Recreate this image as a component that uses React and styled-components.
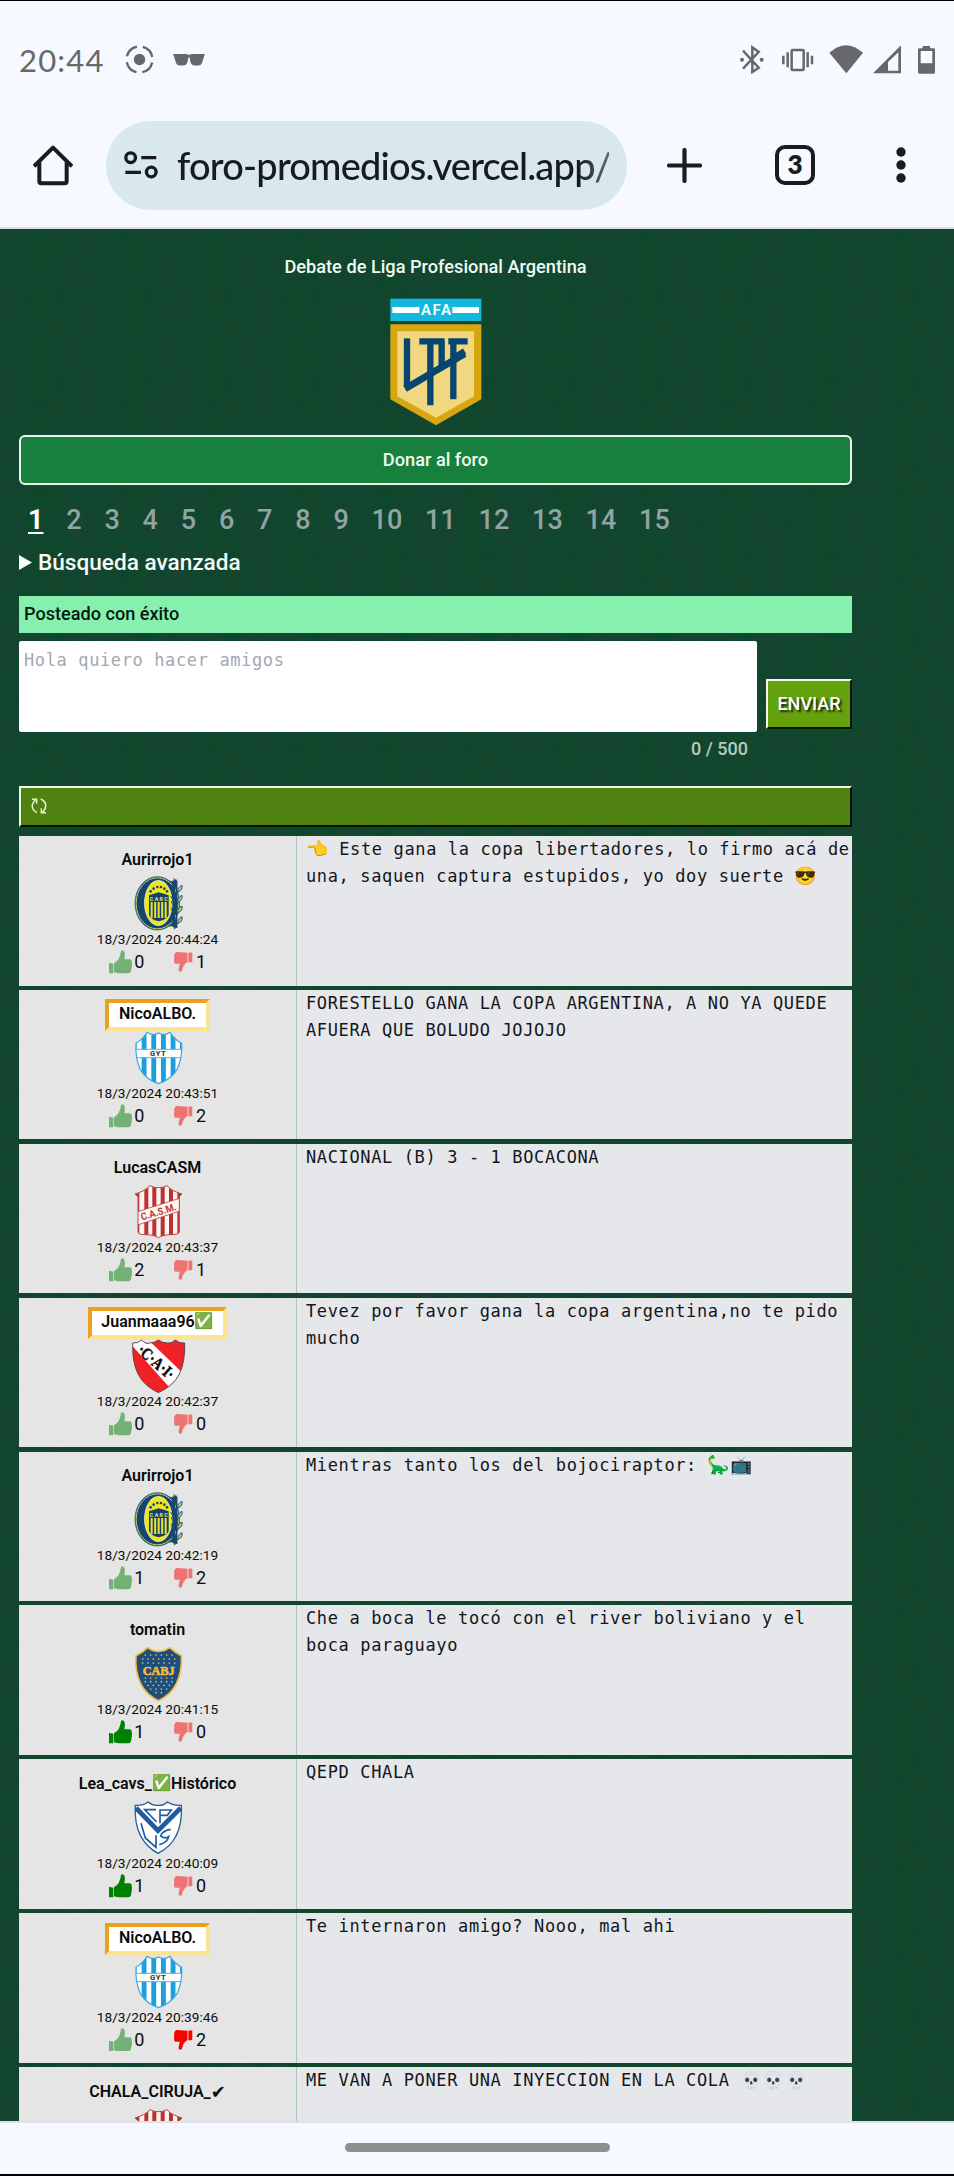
import React from "react";
import styled, { createGlobalStyle } from "styled-components";

const GlobalStyle = createGlobalStyle`
  * { box-sizing: border-box; }
  body { margin: 0; background: #f6f9ff; }
`;

const roboto = `Roboto, "Liberation Sans", sans-serif`;
const mono = `"DejaVu Sans Mono", "Liberation Mono", monospace`;

/* Felt-like grain, tiled over the green of the page. */
const grain = `url("data:image/svg+xml,%3Csvg xmlns='http://www.w3.org/2000/svg' width='86' height='86'%3E%3Cfilter id='f' x='0' y='0' width='100%25' height='100%25' color-interpolation-filters='sRGB'%3E%3CfeTurbulence type='fractalNoise' baseFrequency='0.06 0.12' numOctaves='3' seed='4' stitchTiles='stitch'/%3E%3CfeColorMatrix values='0 0 0 0 0.13 0 0 0 0 0.27 0 0 0 0 0.17 1.6 0 0 0 -0.5'/%3E%3C/filter%3E%3Crect width='86' height='86' filter='url(%23f)' opacity='0.5'/%3E%3C/svg%3E")`;

const Screen = styled.div`
  width: 954px;
  height: 2176px;
  display: flex;
  flex-direction: column;
  overflow: hidden;
  background: #f6f9ff;
  border-top: 1px solid #000;
  border-bottom: 2px solid #000;
  font-family: ${roboto};
`;

const StatusBar = styled.header`
  height: 120px;
  flex: none;
  display: flex;
  align-items: center;
  justify-content: space-between;
  padding: 0 18px 3px 19px;
`;

const StatusGroup = styled.div`
  display: flex;
  align-items: center;
  gap: ${(p) => p.$gap}px;
`;

const Clock = styled.span`
  font: 400 31px/36px Lato, sans-serif;
  letter-spacing: 1.2px;
  width: 87px;
  color: #66686b;
  white-space: nowrap;
`;

const Toolbar = styled.nav`
  height: 108px;
  flex: none;
  padding: 0 48px 18px 33px;
  display: flex;
  align-items: center;
  border-bottom: 2px solid #dcdfe4;
`;

const UrlPill = styled.div`
  width: 521px;
  height: 89px;
  margin: 0 40px 0 33px;
  border-radius: 45px;
  background: #d9e7ef;
  display: flex;
  align-items: center;
  padding: 0 18px;
`;

const Url = styled.span`
  margin-left: 19px;
  width: 433px;
  overflow: hidden;
  white-space: nowrap;
  font: 500 38px/60px Lato, sans-serif;
  letter-spacing: -0.8px;
  color: #171b1e;
  -webkit-mask-image: linear-gradient(to right, #000 93%, rgba(0, 0, 0, 0.6));
`;

const TabCount = styled.div`
  width: 40px;
  height: 40px;
  margin: 0 81px 0 73px;
  border: 4px solid #1a1d20;
  border-radius: 10px;
  font: 800 26px/31px Lato, sans-serif;
  text-align: center;
  color: #1a1d20;
`;

const Page = styled.main`
  flex: 1;
  min-height: 0;
  overflow: hidden;
  padding: 26px 102px 0 19px;
  display: flex;
  flex-direction: column;
  background-color: #0e462d;
  background-image:
    ${grain},
    repeating-linear-gradient(90deg, rgba(22, 66, 58, 0.25) 0 10px, rgba(10, 74, 42, 0.25) 45px, rgba(22, 66, 58, 0.25) 86px);
`;

const Title = styled.h1`
  margin: 0;
  font-size: 18.2px;
  font-weight: 500;
  line-height: 24px;
  text-align: center;
  color: #effaf4;
`;

const LeagueLogo = styled.svg`
  flex: none;
  align-self: center;
  width: 92px;
  height: 128px;
  margin-top: 19px;
`;

const DonateButton = styled.button`
  flex: none;
  height: 50px;
  margin-top: 8.5px;
  border: 2px solid #e9f8ee;
  border-radius: 6px;
  background: #16803c;
  color: #f0fbf4;
  font: 500 18.2px/24px ${roboto};
`;

const Pagination = styled.div`
  display: flex;
  gap: 22.8px;
  margin-top: 15.4px;
  padding-left: 9px;
`;

const PageLink = styled.span`
  font-size: 27px;
  line-height: 40px;
  font-weight: ${(p) => (p.$current ? 700 : 500)};
  color: ${(p) => (p.$current ? "#fff" : "#93a3a5")};
  text-decoration: ${(p) => (p.$current ? "underline" : "none")};
  text-decoration-thickness: 2px;
  text-underline-offset: 3px;
`;

const Search = styled.div`
  display: flex;
  align-items: center;
  gap: 6px;
  margin-top: 8px;
  font-size: 22.6px;
  font-weight: 500;
  line-height: 30px;
  color: #f4fbf7;
`;

const Notice = styled.div`
  height: 37px;
  flex: none;
  margin-top: 18.6px;
  padding-left: 5px;
  background: #88f0ae;
  color: #061a10;
  font-size: 18.1px;
  font-weight: 500;
  line-height: 36px;
`;

const Composer = styled.form`
  display: flex;
  align-items: flex-end;
  margin-top: 8px;
`;

const MessageBox = styled.textarea`
  width: 738px;
  height: 91px;
  padding: 6px 5px;
  border: 0;
  border-radius: 2px;
  resize: none;
  background: #fff;
  font: 17px/27px ${mono};
  letter-spacing: 0.62px;
  &::placeholder { color: #a2a8b2; opacity: 1; }
`;

const SendButton = styled.button`
  width: 86px;
  height: 50px;
  margin: 0 0 3px 9px;
  padding: 0;
  border: 2px solid;
  border-color: #f5fbe8 #0c1602 #0c1602 #f5fbe8;
  background: #65a00d;
  color: #fff;
  font: 500 18px/24px ${roboto};
  text-shadow: 2px 2px 2px #1a2a05;
`;

const Counter = styled.div`
  margin: 5px 104px 0 0;
  text-align: right;
  font-size: 18px;
  font-weight: 500;
  line-height: 24px;
  color: #b8cbc0;
`;

const RefreshBar = styled.button`
  flex: none;
  height: 41px;
  margin: 24.5px 0 9px;
  padding: 0 10px;
  border: 2px solid;
  border-color: #effbe2 #071002 #071002 #effbe2;
  background: #4f8210;
  display: flex;
  align-items: center;
`;

const Posts = styled.section`
  display: flex;
  flex-direction: column;
  gap: 4.3px;
`;

const Post = styled.article`
  display: flex;
  flex: none;
  height: 149.6px;
  background: #e5e7eb;
`;

const Author = styled.aside`
  width: 278px;
  flex: none;
  padding-top: 9.5px;
  display: flex;
  flex-direction: column;
  align-items: center;
  background: #e5e5e5;
  border-right: 1px solid #a9c6c0;
`;

const Name = styled.div`
  height: 32px;
  padding: 0 ${(p) => (p.$boxed ? 9.5 : 0)}px;
  border: 4.5px solid;
  border-color: ${(p) => (p.$boxed ? "#eba023 #fbe392 #fbe392 #eba023" : "transparent")};
  background: ${(p) => (p.$boxed ? "#fff" : "transparent")};
  font-size: 16px;
  font-weight: 600;
  line-height: 22px;
  color: #0a0a0a;
  white-space: nowrap;
  display: flex;
`;

const Tick = styled.span`
  font-family: "DejaVu Sans", sans-serif;
  font-size: 18px;
  font-weight: 700;
`;

const Crest = styled.svg`
  width: 56px;
  height: 56px;
  flex: none;
  margin-top: -1px;
`;

const Timestamp = styled.time`
  margin-top: -1px;
  font-size: 13.7px;
  line-height: 16px;
  color: #0c0c0c;
`;

const Votes = styled.div`
  display: flex;
  width: 97px;
  height: 24px;
  margin-top: 3px;
`;

const Vote = styled.span`
  display: flex;
  align-items: flex-start;
  gap: ${(p) => (p.$up ? 2 : 3)}px;
  width: ${(p) => (p.$up ? 65 : 32)}px;
  font-size: 18px;
  line-height: 24px;
  color: #0c0c0c;
`;

const Message = styled.p`
  margin: 0;
  padding-left: 9px;
  font-family: ${mono};
  font-size: 17px;
  letter-spacing: 0.625px;
  line-height: 27px;
  color: #14161a;
  white-space: pre;
`;

const Emoji = styled.span`
  display: inline-block;
  width: ${(p) => p.$w || 22.4}px;
  font-family: "Noto Color Emoji", sans-serif;
  font-size: ${(p) => p.$size || 18}px;
  letter-spacing: 0;
  line-height: 20px;
  vertical-align: baseline;
`;

const HomeBar = styled.footer`
  height: 53px;
  flex: none;
  border-top: 2px solid #dee2e6;
  display: flex;
  justify-content: center;
  padding: 20px 0 0 0;
`;

const Handle = styled.div`
  width: 265px;
  height: 9px;
  border-radius: 5px;
  background: #8b9090;
`;

const ShieldStripes = ({ xs, w, y, h, fill }) => xs.map((x) => <rect key={x} x={x} y={y} width={w} height={h} fill={fill} />);

function Central() {
  return (
    <Crest viewBox="388 138 168 168">
      <path d="M506 152 Q522 156 519 145 L529 150 V290 L521 299 Q520 286 504 290Z" fill="#17466f" stroke="#a9b56a" strokeWidth="2" />
      <ellipse cx="470" cy="220" rx="67" ry="80" fill="#14456f" stroke="#3d6c93" strokeWidth="3" />
      <ellipse cx="470" cy="220" rx="63.500" ry="76.500" fill="none" stroke="#c5cd52" strokeWidth="3" />
      <path d="M519 156 V288" stroke="#17466f" strokeWidth="9" />
      <ellipse cx="473" cy="219" rx="41" ry="67" fill="#f3e51c" stroke="#dfe3a0" strokeWidth="3.500" />
      <path d="M445 196 L474 187 L504 196 V255 Q500 268 474 274 Q449 268 445 255Z" fill="#12406c" />
      <ShieldStripes xs={[450, 460.5, 471, 481.5, 492]} w={6} y={216} h={48} fill="#ece32e" />
      <text x="474.5" y="213" fontSize="16" fontWeight="700" textAnchor="middle" fill="#e9e98a" fontFamily="Roboto" textLength="54">CARC</text>
      <g fill="#164a7c">
        <circle cx="450" cy="184" r="4" /><circle cx="459" cy="176" r="4" /><circle cx="470" cy="171" r="4" />
        <circle cx="481" cy="171" r="4" /><circle cx="491" cy="176" r="4" /><circle cx="499" cy="184" r="4" />
      </g>
      <path d="M510 198 l7 12 l-5 6 l7 12 l-7 8 l5 10" fill="none" stroke="#164a7c" strokeWidth="3" />
      <path d="M528 152 V294" stroke="#17466f" strokeWidth="4" />
      {[166, 196, 228, 260].map((y) => (
        <path key={y} d={`M531 ${y + 21} Q530 ${y + 6} 544 ${y} Q547 ${y + 15} 531 ${y + 21}Z`} fill="#b9c676" stroke="#1b4e79" strokeWidth="2.800" />
      ))}
    </Crest>
  );
}

function Gimnasia() {
  const d = "M439 607 Q456 619 473 609 Q491 619 508 607 Q520 627 543 640 Q546 683 529 719 Q510 749 473 761 Q437 749 419 719 Q403 683 406 640 Q428 627 439 607Z";
  return (
    <Crest viewBox="388 600 168 168">
      <clipPath id="gyt"><path d={d} /></clipPath>
      <g clipPath="url(#gyt)">
        <rect x="400" y="600" width="150" height="168" fill="#fdfeff" />
        <ShieldStripes xs={[393, 423, 452, 481, 510, 538]} w={14.5} y={600} h={168} fill="#1e9fdd" />
        <rect x="400" y="658" width="150" height="25" fill="#fff" stroke="#4fb4e6" strokeWidth="3" />
      </g>
      <path d={d} fill="none" stroke="#35a9e2" strokeWidth="3.5" />
      <text x="471.5" y="679" fontSize="23" fontWeight="700" textAnchor="middle" fill="#24343c" fontFamily="Roboto" textLength="47">GYT</text>
    </Crest>
  );
}

function SanMartin() {
  const d = "M448 137 Q461 144 473 143 Q486 144 499 137 Q512 153 544 162 L536 170 V276 Q534 284 514 284 Q486 284 473 293 Q460 284 434 284 Q413 284 412 276 V170 L403 162 Q434 153 448 137Z";
  return (
    <Crest viewBox="388 132 168 168">
      <clipPath id="casm"><path d={d} /></clipPath>
      <g clipPath="url(#casm)">
        <rect x="400" y="130" width="150" height="170" fill="#fbf3f2" />
        <ShieldStripes xs={[404, 431, 455, 480, 505, 530]} w={12} y={130} h={170} fill="#b8322f" />
        <path d="M408 216 L540 174 V212 L408 256Z" fill="#fdf8f7" stroke="#bd4541" strokeWidth="2.5" />
      </g>
      <path d={d} fill="none" stroke="#b94642" strokeWidth="3" />
      <text x="474" y="226" fontSize="30" fontWeight="700" textAnchor="middle" fill="#bd3430" fontFamily="Roboto" textLength="110" lengthAdjust="spacingAndGlyphs" transform="rotate(-17 474 217)">C.A.S.M.</text>
    </Crest>
  );
}

function Independiente() {
  const d = "M423 599 Q436 613 447 608 Q462 608 473 599 Q486 608 500 608 Q514 610 524 599 Q536 610 552 608 Q554 665 536 701 Q518 737 473 757 Q430 737 412 701 Q394 665 396 608 Q412 610 423 599Z";
  return (
    <Crest viewBox="388 593 168 168">
      <clipPath id="cai"><path d={d} /></clipPath>
      <g clipPath="url(#cai)">
        <rect x="388" y="590" width="170" height="170" fill="#ee2228" />
        <path d="M380 600 L436 592 L550 702 L510 745Z" fill="#fff" />
      </g>
      <path d={d} fill="none" stroke="#4b3a3c" strokeWidth="2.5" />
      <text x="466" y="681" fontSize="50" fontWeight="700" textAnchor="middle" fill="#0b0b0b" stroke="#0b0b0b" strokeWidth="1.500" fontFamily="Liberation Serif, serif" textLength="130" lengthAdjust="spacingAndGlyphs" transform="rotate(41 466 665)">·C·A·I·</text>
    </Crest>
  );
}

function Boca() {
  const d = "M441 592 Q457 604 473 603 Q490 604 507 592 Q522 606 542 616 Q545 662 527 700 Q511 733 473 751 Q436 733 420 700 Q402 662 406 616 Q427 606 441 592Z";
  return (
    <Crest viewBox="388 587 168 168">
      <path d={d} fill="#1d4e7d" stroke="#f3ba3c" strokeWidth="5" />
      <g fill="#d5bf72">
        {[[614, 6], [626, 7], [638, 7], [683, 6], [694, 6], [705, 5], [716, 4], [727, 2]].map(([y, n]) =>
          Array.from({ length: n }, (_, i) => <circle key={`${y}-${i}`} cx={474 + (i - (n - 1) / 2) * 16} cy={y} r="2.6" />)
        )}
      </g>
      <text x="474" y="675" fontSize="39" fontWeight="700" textAnchor="middle" fill="#f6b73a" fontFamily="Liberation Serif, serif" stroke="#f6b73a" strokeWidth="2" textLength="96" lengthAdjust="spacingAndGlyphs">CABJ</text>
    </Crest>
  );
}

function Velez() {
  const d = "M404 136 Q426 138 442 126 Q456 138 473 136 Q488 138 500 126 Q520 138 542 136 Q545 190 527 226 Q510 262 472 280 Q438 262 419 226 Q401 190 404 136Z";
  return (
    <Crest viewBox="388 120 168 168">
      <path d={d} fill="#fff" stroke="#2460a0" strokeWidth="4" />
      <path d="M406 144 L472 212 L540 144" fill="none" stroke="#1f5b9f" strokeWidth="14" />
      <g fill="none" stroke="#1f5b9f" strokeWidth="5">
        <path d="M466 149 H432 L468 186" />
        <path d="M478 190 V150 H512 L500 166 H480" />
        <path d="M421 190 L434 234 L466 262 V226" />
        <path d="M510 208 Q484 212 480 228 Q494 238 504 230 Q500 248 476 254" />
      </g>
    </Crest>
  );
}

const crests = { central: Central, gyt: Gimnasia, casm: SanMartin, cai: Independiente, boca: Boca, velez: Velez };

const ThumbUp = ({ active }) => (
  <svg width="23.3" height="23.7" viewBox="328 363 70 71" fill={active ? "#008000" : "#74b174"}>
    <path d="M328 401 L341 404 V433 H328Z" />
    <path d="M343 403 Q361 394 364 366 Q367 362 373 366 Q378 373 374 391 H391 Q398 393 396 400 L398 405 Q395 410 397 414 Q394 419 395 423 Q393 433 386 433 H356 L343 430Z" />
  </svg>
);

const ThumbDown = ({ active }) => (
  <svg width="21" height="23.7" viewBox="522 363 63 71" fill={active ? "#ff0000" : "#ee7373"}>
    <path d="M570 367 H583 V399 L570 401Z" />
    <path d="M567 368 V399 Q552 408 548 430 Q538 434 537 426 L541 405 H527 Q520 402 523 396 Q520 391 523 386 L522 381 Q523 367 532 366Z" />
  </svg>
);

const posts = [
  { name: "Aurirrojo1", crest: "central", date: "18/3/2024 20:44:24", up: 0, down: 1,
    text: <><Emoji>👈</Emoji> Este gana la copa libertadores, lo firmo acá de{"\n"}una, saquen captura estupidos, yo doy suerte <Emoji>😎</Emoji></> },
  { name: "NicoALBO.", boxed: true, crest: "gyt", date: "18/3/2024 20:43:51", up: 0, down: 2,
    text: "FORESTELLO GANA LA COPA ARGENTINA, A NO YA QUEDE\nAFUERA QUE BOLUDO JOJOJO" },
  { name: "LucasCASM", crest: "casm", date: "18/3/2024 20:43:37", up: 2, down: 1, text: "NACIONAL (B) 3 - 1 BOCACONA" },
  { name: <>Juanmaaa96<Emoji $w={19} $size={15.5}>✅</Emoji></>, boxed: true, crest: "cai", date: "18/3/2024 20:42:37", up: 0, down: 0,
    text: "Tevez por favor gana la copa argentina,no te pido\nmucho" },
  { name: "Aurirrojo1", crest: "central", date: "18/3/2024 20:42:19", up: 1, down: 2,
    text: <>Mientras tanto los del bojociraptor: <Emoji>🦕</Emoji><Emoji>📺</Emoji></> },
  { name: "tomatin", crest: "boca", date: "18/3/2024 20:41:15", up: 1, upActive: true, down: 0,
    text: "Che a boca le tocó con el river boliviano y el\nboca paraguayo" },
  { name: <>Lea_cavs_<Emoji $w={19} $size={15.5}>✅</Emoji>Histórico</>, crest: "velez", date: "18/3/2024 20:40:09", up: 1, upActive: true, down: 0,
    text: "QEPD CHALA" },
  { name: "NicoALBO.", boxed: true, crest: "gyt", date: "18/3/2024 20:39:46", up: 0, down: 2, downActive: true,
    text: "Te internaron amigo? Nooo, mal ahi" },
  { name: <>CHALA_CIRUJA_<Tick>✔</Tick></>, crest: "casm", date: "", up: 0, down: 0,
    text: <>ME VAN A PONER UNA INYECCION EN LA COLA <Emoji>💀</Emoji><Emoji>💀</Emoji><Emoji>💀</Emoji></> },
];

function PostRow({ post }) {
  const Badge = crests[post.crest];
  return (
    <Post>
      <Author>
        <Name $boxed={post.boxed}>{post.name}</Name>
        <Badge />
        <Timestamp>{post.date}</Timestamp>
        {post.date && (
          <Votes>
            <Vote $up><ThumbUp active={post.upActive} />{post.up}</Vote>
            <Vote><ThumbDown active={post.downActive} />{post.down}</Vote>
          </Votes>
        )}
      </Author>
      <Message>{post.text}</Message>
    </Post>
  );
}

export default function App() {
  return (
    <Screen>
      <GlobalStyle />
      <StatusBar>
        <StatusGroup $gap={19}>
          <Clock>20:44</Clock>
          <svg width="29" height="29" viewBox="-14.5 -14.5 29 29" fill="none" stroke="#66686b" strokeWidth="2.4">
            <circle r="5.7" fill="#66686b" stroke="none" />
            <circle r="13" strokeDasharray="14.4 6.02" strokeDashoffset="-3" />
          </svg>
          <svg width="32" height="14" viewBox="0 0 32 14" fill="#66686b">
            <path d="M0 1 H13 Q16 2.5 19 1 H32 L31 3.5 L29 10 Q28 12.5 25 12.5 H22 Q18.500 12.500 17.500 9 L16.600 4.500 H15.400 L14.500 9 Q13.500 12.500 10 12.500 H7 Q4 12.500 3 10 L1 3.500Z" />
          </svg>
        </StatusGroup>
        <svg width="196" height="29" viewBox="798 135 588 87" fill="#66686b">
          <g fill="none" stroke="#66686b" strokeWidth="7.5">
            <path d="M807 152 L854 203 L835 216 V142 L854 156 L807 206" />
            <rect x="953" y="150" width="36" height="60" rx="3" />
            <path d="M928 167 V193 M941 157 V202 M1001 157 V202 M1014 167 V193" />
          </g>
          <circle cx="804" cy="179" r="6" /><circle cx="863" cy="179" r="6" />
          <path d="M1066 158 Q1116 113 1167 158 L1117 220Z" />
          <path fillRule="evenodd" d="M1197 220 L1281 136 V220Z M1242 186 L1273 157 V212 H1242Z" />
          <path fillRule="evenodd" d="M1332 149 Q1332 145 1336 145 H1346 V138 H1368 V145 H1379 Q1383 145 1383 149 V217 Q1383 221 1379 221 H1336 Q1332 221 1332 217Z M1340 153 V190 H1375 V153Z" />
        </svg>
      </StatusBar>
      <Toolbar>
        <svg width="40" height="41" viewBox="99 432 120 123" fill="none" stroke="#1a1d20" strokeWidth="12" strokeLinejoin="round">
          <path d="M102 496 L159 440 L216 496" />
          <path d="M118 484 V541 Q118 547 124 547 H194 Q200 547 200 541 V484" />
        </svg>
        <UrlPill>
          <svg width="34" height="29" viewBox="373 451 102 87" fill="none" stroke="#171b1e" strokeWidth="10">
            <circle cx="393" cy="471" r="14.500" /><circle cx="455" cy="514" r="14.500" />
            <path d="M425 471 H470 M377 515 H424" />
          </svg>
          <Url>foro-promedios.vercel.app/d</Url>
        </UrlPill>
        <svg width="35" height="35" viewBox="0 0 35 35" stroke="#1a1d20" strokeWidth="4.200" strokeLinecap="round">
          <path d="M17.500 2 V33 M2 17.500 H33" />
        </svg>
        <TabCount>3</TabCount>
        <svg width="10" height="36" viewBox="0 0 10 36" fill="#1a1d20">
          <circle cx="5" cy="5" r="4.700" /><circle cx="5" cy="18" r="4.700" /><circle cx="5" cy="31" r="4.700" />
        </svg>
      </Toolbar>
      <Page>
        <Title>Debate de Liga Profesional Argentina</Title>
        <LeagueLogo viewBox="29 24 276 384">
          <rect x="30" y="26" width="273" height="67" fill="#12b9dc" />
          <path d="M36 60 H117 M216 60 H296" stroke="#fff" strokeWidth="18" />
          <text x="167" y="76" fontSize="45" fontWeight="600" textAnchor="middle" fill="#fff" fontFamily="Roboto" textLength="90">AFA</text>
          <path d="M30 103 H303 V328 L167 406 L30 328Z" fill="#d7a712" />
          <path d="M51 124 H281 V319 L167 383 L51 319Z" fill="#f1d880" />
          <g fill="none" stroke="#08466f" strokeWidth="19">
            <path d="M80 145 V290" />
            <path d="M74 296 L253 191" strokeWidth="21" />
            <path d="M117 154 H193 M150 154 V346 M184 154 V232" />
            <path d="M204 154 H262 M219 148 V328 M226 200 L253 184" />
          </g>
        </LeagueLogo>
        <DonateButton>Donar al foro</DonateButton>
        <Pagination>
          {Array.from({ length: 15 }, (_, i) => <PageLink key={i} $current={i === 0}>{i + 1}</PageLink>)}
        </Pagination>
        <Search>
          <svg width="13" height="15" viewBox="0 0 13 15" fill="#fff"><path d="M0 0 L13 7.500 L0 15Z" /></svg>
          Búsqueda avanzada
        </Search>
        <Notice>Posteado con éxito</Notice>
        <Composer>
          <MessageBox placeholder="Hola quiero hacer amigos" />
          <SendButton type="button">ENVIAR</SendButton>
        </Composer>
        <Counter>0 / 500</Counter>
        <RefreshBar>
          <svg width="16" height="16" viewBox="92 956 48 48" fill="none" stroke="#e6f2d4" strokeWidth="4.500">
            <path d="M110 1000 Q94 992 96 977 Q98 966 107 960 M95 960 H109 V973" />
            <path d="M121 959 Q137 966 136 981 Q134 994 125 999 M137 1000 H123 V987" />
          </svg>
        </RefreshBar>
        <Posts>
          {posts.map((post, i) => <PostRow key={i} post={post} />)}
        </Posts>
      </Page>
      <HomeBar><Handle /></HomeBar>
    </Screen>
  );
}
